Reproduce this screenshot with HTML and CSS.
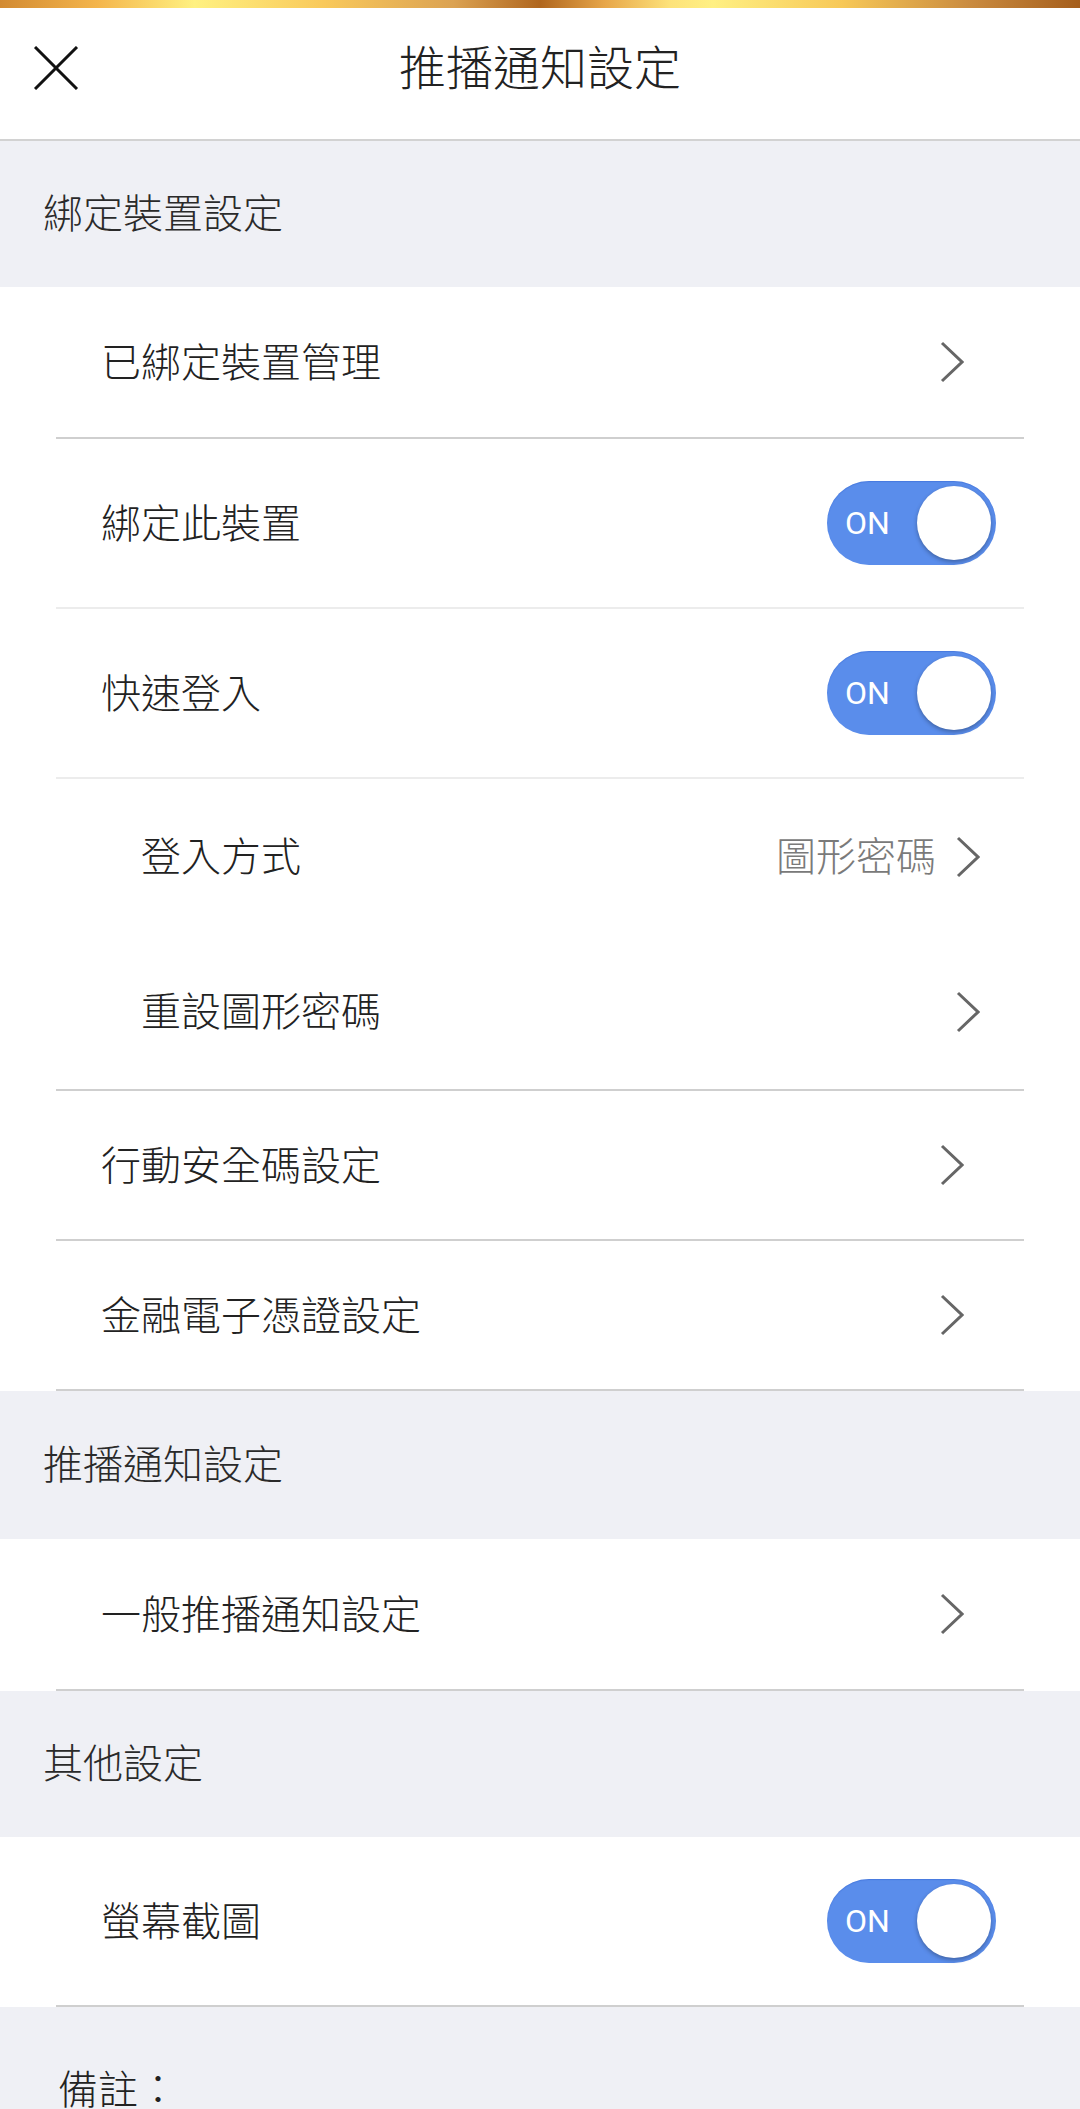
FILE: index.html
```html
<!DOCTYPE html>
<html lang="zh-Hant">
<head>
    <meta charset="UTF-8">
    <meta name="viewport" content="width=device-width, initial-scale=1.0">
    <title>推播通知設定</title>
    <link rel="stylesheet" href="styles.css">
</head>
<body>
    <div class="gold-bar"></div>
    <header class="nav">
        <button class="close" aria-label="關閉">
            <svg width="46" height="44" viewBox="0 0 46 44">
                <line x1="2" y1="1" x2="44" y2="43" />
                <line x1="44" y1="1" x2="2" y2="43" />
            </svg>
        </button>
        <h1>推播通知設定</h1>
    </header>

    <div class="group-title">綁定裝置設定</div>
    <ul class="list">
        <li class="item link">
            <span class="label">已綁定裝置管理</span>
            <svg class="chevron" width="24" height="42" viewBox="0 0 24 42"><polyline points="2,2 22,21 2,40" /></svg>
        </li>
        <li class="item toggle soft">
            <span class="label">綁定此裝置</span>
            <div class="switch"><span>ON</span><i class="knob"></i></div>
        </li>
        <li class="item toggle soft">
            <span class="label">快速登入</span>
            <div class="switch"><span>ON</span><i class="knob"></i></div>
        </li>
        <li class="item sub no-line">
            <span class="label">登入方式</span>
            <span class="value">圖形密碼</span>
            <svg class="chevron" width="24" height="42" viewBox="0 0 24 42"><polyline points="2,2 22,21 2,40" /></svg>
        </li>
        <li class="item sub">
            <span class="label">重設圖形密碼</span>
            <svg class="chevron" width="24" height="42" viewBox="0 0 24 42"><polyline points="2,2 22,21 2,40" /></svg>
        </li>
        <li class="item link short">
            <span class="label">行動安全碼設定</span>
            <svg class="chevron" width="24" height="42" viewBox="0 0 24 42"><polyline points="2,2 22,21 2,40" /></svg>
        </li>
        <li class="item link short">
            <span class="label">金融電子憑證設定</span>
            <svg class="chevron" width="24" height="42" viewBox="0 0 24 42"><polyline points="2,2 22,21 2,40" /></svg>
        </li>
    </ul>

    <div class="group-title tall">推播通知設定</div>
    <ul class="list">
        <li class="item link">
            <span class="label">一般推播通知設定</span>
            <svg class="chevron" width="24" height="42" viewBox="0 0 24 42"><polyline points="2,2 22,21 2,40" /></svg>
        </li>
    </ul>

    <div class="group-title">其他設定</div>
    <ul class="list">
        <li class="item toggle">
            <span class="label">螢幕截圖</span>
            <div class="switch"><span>ON</span><i class="knob"></i></div>
        </li>
    </ul>

    <div class="notes">
        <p>備註：</p>
    </div>
</body>
</html>
```

FILE: styles.css
```css
body {
    margin: 0;
    font-family: "Noto Sans CJK TC", "Noto Sans", sans-serif;
    font-weight: 300;
    background-color: #eff0f5;
    color: #222;
}

.gold-bar {
    height: 8px;
    background: linear-gradient(90deg, #d28a32 0%, #f4b54c 9%, #fff181 18%, #f9c95b 30%, #dba252 42%, #b0661e 50%, #e7a649 56%, #fde27a 62%, #fff083 66%, #f7c857 78%, #c98a3f 90%, #a55e1c 100%);
}

/* header */
.nav {
    height: 120px;
    padding-bottom: 11px;
    background: #fff;
    border-bottom: 2px solid #d2d2d2;
    display: flex;
    align-items: center;
    justify-content: center;
    position: relative;
}

.nav h1 {
    margin: 0 0 6px;
    font-size: 47px;
    font-weight: 300;
    color: #222;
    line-height: 1.2;
}

.close {
    position: absolute;
    left: 33px;
    top: 38px;
    padding: 0;
    border: none;
    background: none;
}

.close svg line {
    stroke: #111;
    stroke-width: 3;
}

/* sections */
.group-title {
    height: 146px;
    box-sizing: border-box;
    padding: 0 0 7px 43px;
    display: flex;
    align-items: center;
    font-size: 40px;
    line-height: 1.2;
    color: #2a2a2a;
}

.group-title.tall {
    height: 148px;
}

.list {
    list-style: none;
    margin: 0;
    padding: 0;
    background: #fff;
}

.item {
    margin: 0 56px;
    height: 150px;
    padding-left: 45px;
    display: flex;
    align-items: center;
    border-bottom: 2px solid #cfcfcf;
    font-size: 40px;
}

.item .label {
    flex: 1;
    line-height: 1.2;
    margin-bottom: 5px;
}

.item.link {
    padding-right: 60px;
}

.item.short {
    height: 148px;
}

.item.toggle {
    height: 168px;
    padding-right: 28px;
}

.item.soft {
    border-bottom-color: #ececec;
}

.item.sub {
    height: 155px;
    padding-left: 85px;
    padding-right: 44px;
}

.item.no-line {
    border-bottom: none;
}

.value {
    color: #7a7a7a;
    margin: 0 20px 5px 0;
    line-height: 1.2;
}

.chevron polyline {
    fill: none;
    stroke: #666;
    stroke-width: 3;
}

/* switch */
.switch {
    width: 169px;
    height: 84px;
    border-radius: 42px;
    background-color: #5a8deb;
    box-shadow: inset 0 1px 1px rgba(40, 90, 200, 0.35);
    position: relative;
    display: flex;
    align-items: center;
}

.switch span {
    font-family: Roboto, "Liberation Sans", sans-serif;
    font-weight: normal;
    font-size: 32px;
    color: #fff;
    margin-left: 18px;
    line-height: 1;
}

.knob {
    position: absolute;
    right: 5px;
    top: 5px;
    width: 74px;
    height: 74px;
    border-radius: 50%;
    background: #fff;
    box-shadow: 0 2px 4px rgba(0, 0, 0, 0.3);
}

.notes {
    padding: 52px 58px 40px;
}

.notes p {
    margin: 0;
    font-size: 40px;
    line-height: 1.4;
    color: #222;
}
```
